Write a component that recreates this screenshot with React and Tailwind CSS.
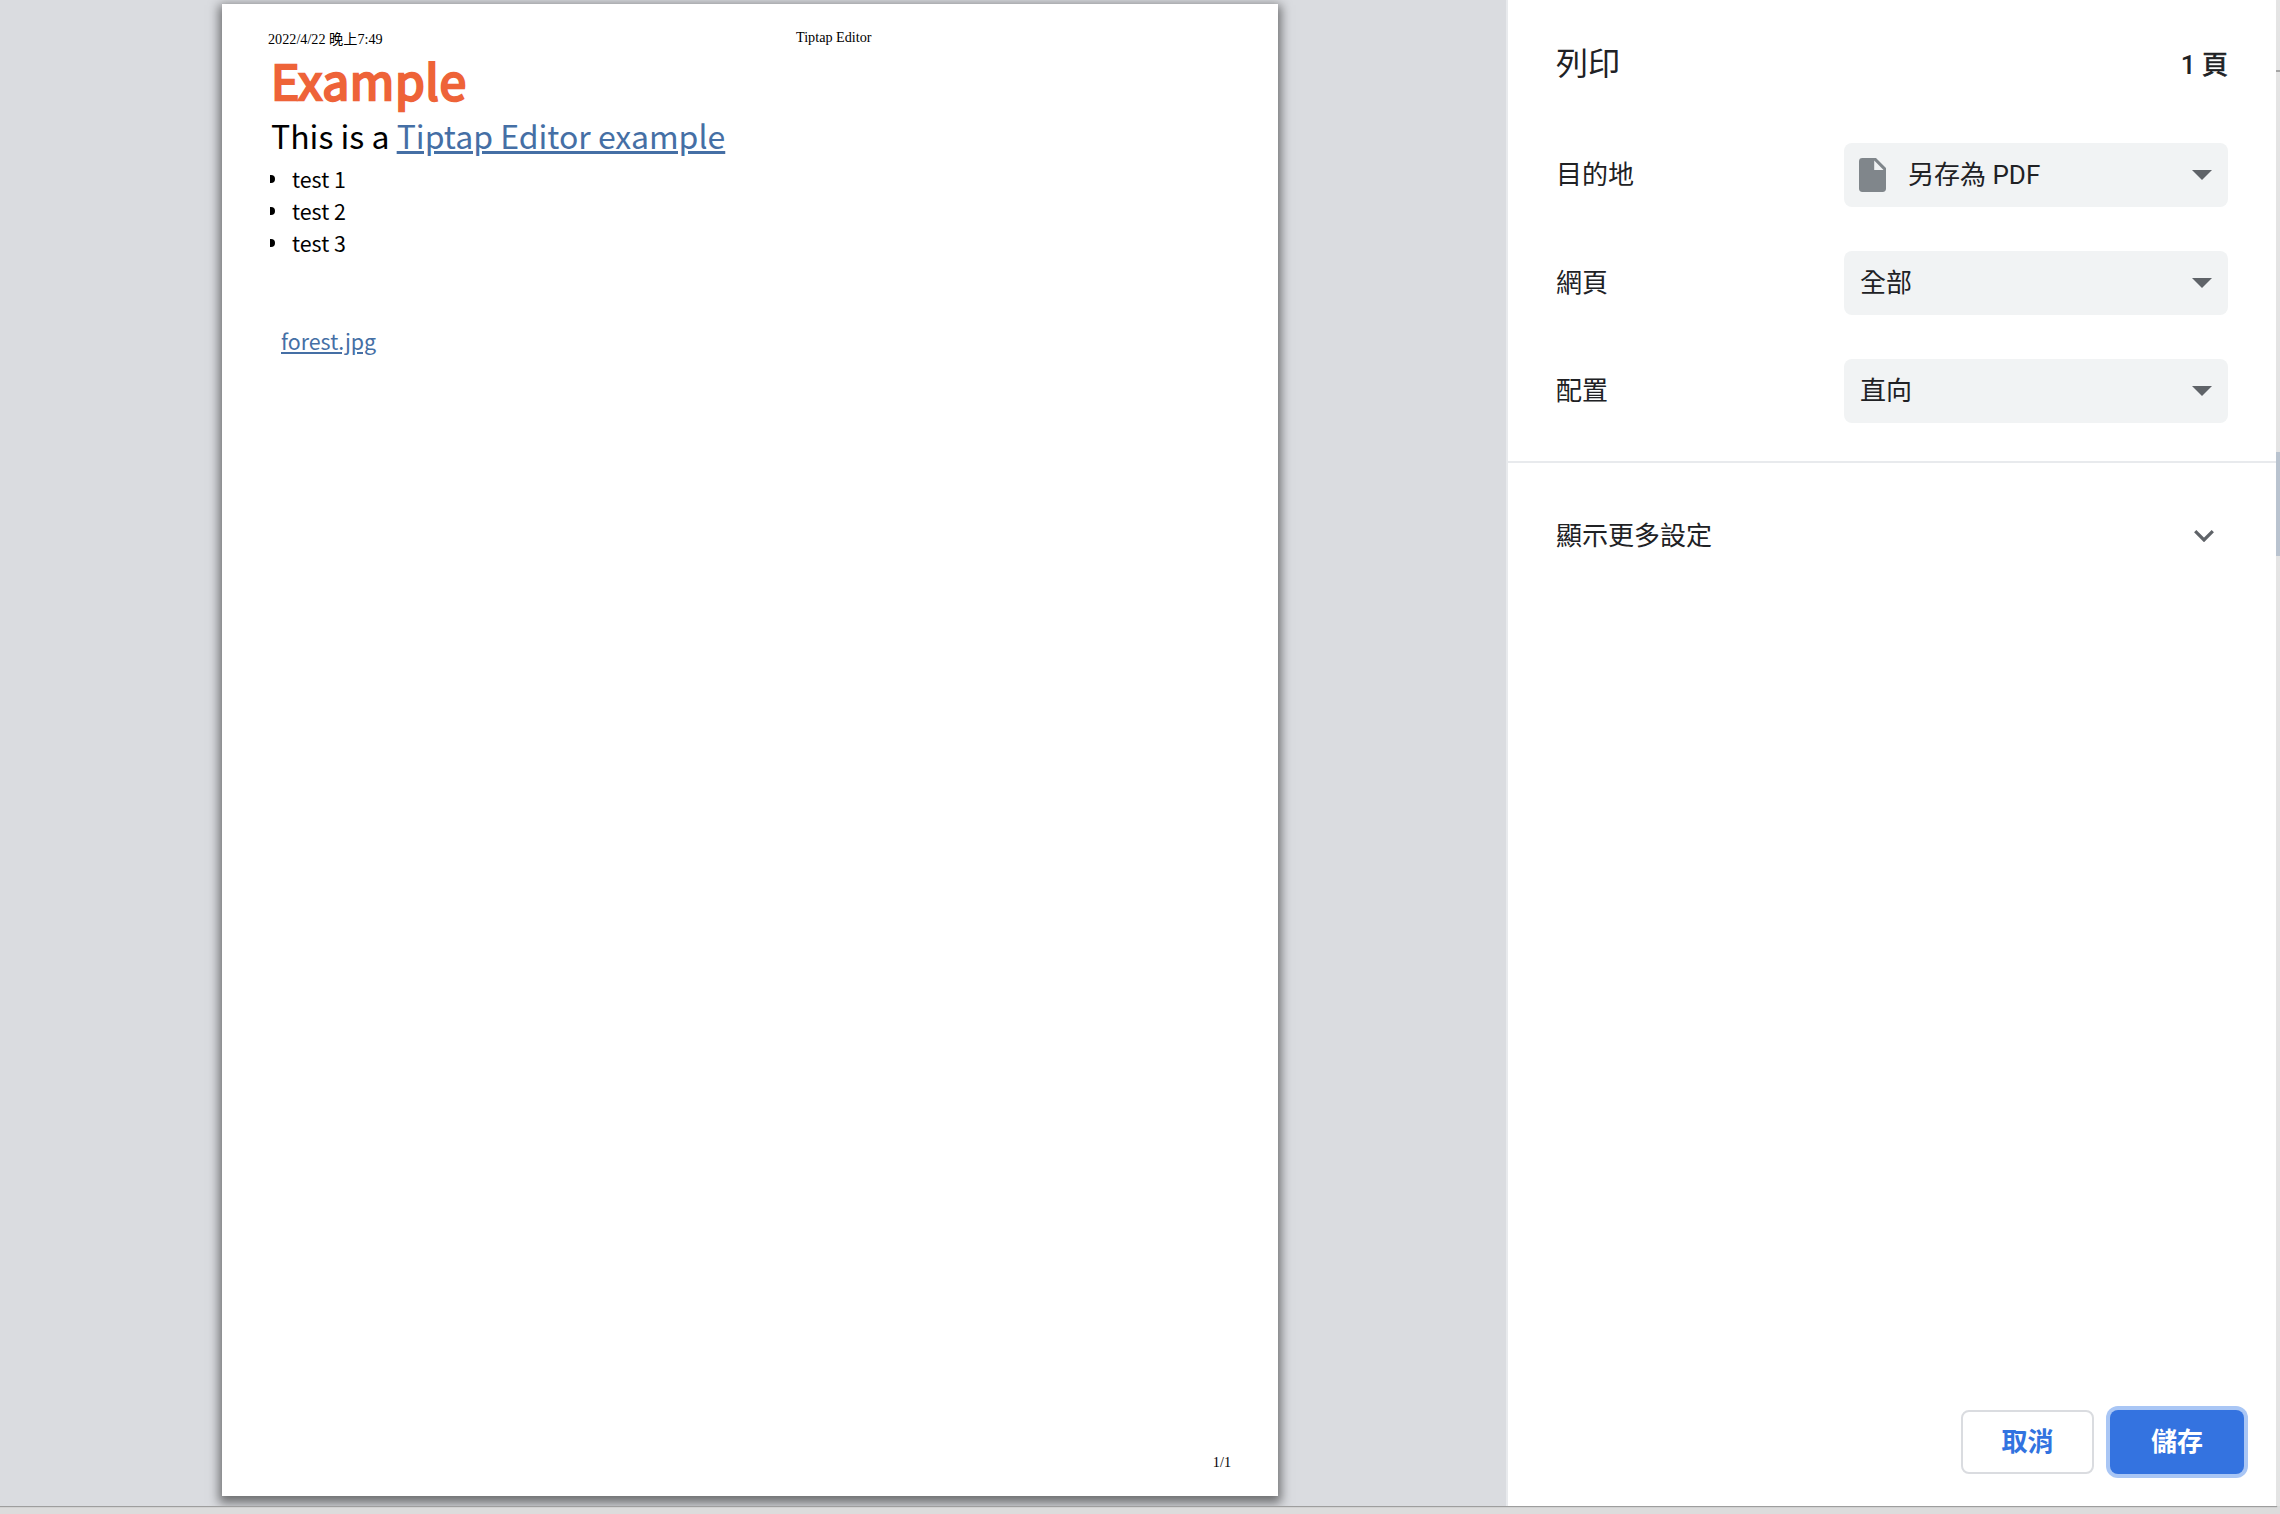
const DOC = "font-['Noto_Sans_CJK_TC',sans-serif]";
const UI = "font-[Roboto,'Noto_Sans_CJK_TC',sans-serif]";
const SERIF = "font-['Liberation_Serif','Noto_Sans_CJK_TC',serif]";

function Caret() {
  return (
    <svg className="ml-auto mr-[16px] h-[10px] w-[20px] shrink-0" viewBox="0 0 20 10">
      <path d="M0 0h20L10 10z" fill="#5f6368" />
    </svg>
  );
}

function FileIcon() {
  return (
    <svg className="-ml-px mr-[22px] h-[34px] w-[27px] shrink-0" viewBox="0 0 27 34">
      <path
        d="M3.4 0H17l10 10v20.6a3.4 3.4 0 0 1-3.4 3.4H3.4A3.4 3.4 0 0 1 0 30.6V3.4A3.4 3.4 0 0 1 3.4 0zM15.2 2.6v9.400H24.6z"
        fill="#80868b"
        fillRule="evenodd"
      />
    </svg>
  );
}

function Setting({ label, value, icon }) {
  return (
    <div className="flex h-[64px] items-center justify-between pl-[48px] pr-[48px]">
      <span>{label}</span>
      <div className="flex h-[64px] w-[384px] items-center rounded-[8px] bg-[#f1f3f4] pl-[16px]">
        {icon && <FileIcon />}
        <span className="whitespace-pre">{value}</span>
        <Caret />
      </div>
    </div>
  );
}

function Page() {
  return (
    <div className="flex h-[1492px] w-[1056px] flex-col bg-white text-black shadow-[0_4px_10px_3px_rgba(0,0,0,0.5)]">
      <div className={`flex h-[50px] text-[14.2px] leading-[20px] ${SERIF}`}>
        <span className="ml-[46px] mt-[25px] w-[528px] whitespace-nowrap">2022/4/22 晚上7:49</span>
        <span className="mt-[23px]">Tiptap Editor</span>
      </div>
      <div className={`flex flex-col pl-[49px] ${DOC}`}>
        <h1 className="h-[56px] text-[48px] font-normal leading-[50px] tracking-[0.6px] text-[#ee6338] [-webkit-text-stroke:2.4px_#ee6338]">
          Example
        </h1>
        <p className="h-[53px] whitespace-nowrap text-[32px] leading-[50px]">
          This is a <span className="text-[#456fa5] underline">Tiptap Editor example</span>
        </p>
        <ul className="flex flex-col text-[21.4px] leading-[32px]">
          {["test 1", "test 2", "test 3"].map((t) => (
            <li key={t} className="flex items-center">
              <span className="-ml-px mr-[17px] h-[8px] w-[5px] rounded-r-full bg-black" />
              {t}
            </li>
          ))}
        </ul>
        <span className="ml-[10px] mt-[66px] text-[21.4px] leading-[32px] text-[#456fa5] underline">forest.jpg</span>
      </div>
      <span className={`mb-[24px] ml-auto mr-[47px] mt-auto text-[14.2px] leading-[20px] ${SERIF}`}>1/1</span>
    </div>
  );
}

export default function App() {
  return (
    <div className="relative flex h-[1514px] w-[2280px] flex-col overflow-hidden bg-[#dcdcdc]">
      <div className="flex h-[1506px]">
        <div className="flex h-full w-[2276px] shrink-0 bg-white shadow-[0_0_1px_1px_rgba(0,0,0,0.28)]">
          <div className="flex w-[1506px] shrink-0 overflow-hidden bg-[#dadce0] pl-[222px] pt-[4px]">
            <Page />
          </div>
          <aside className={`flex grow flex-col border-l-2 border-[#e8eaed] text-[26px] leading-[40px] text-[#202124] ${UI}`}>
            <header className="flex h-[143px] items-start justify-between px-[48px] pt-[44px]">
              <h1 className="text-[32px]">列印</h1>
              <span className="mt-px font-medium">
                1 <span className="font-normal [-webkit-text-stroke:0.7px_#202124]">頁</span>
              </span>
            </header>
            <div className="flex flex-col gap-[44px] pb-[38px]">
              <Setting label="目的地" value="另存為 PDF" icon />
              <Setting label="網頁" value="全部" />
              <Setting label="配置" value="直向" />
            </div>
            <div className="h-[2px] bg-[#e8eaed]" />
            <div className="flex h-[146px] items-center justify-between pl-[48px] pr-[62px]">
              <span>顯示更多設定</span>
              <svg className="h-[12px] w-[20px]" viewBox="0 0 20 12">
                <path d="M1.2 1.2L10 10l8.800-8.800" fill="none" stroke="#5f6368" strokeWidth="3.200" />
              </svg>
            </div>
            <footer className="mt-auto flex justify-end gap-[16px] pb-[32px] pr-[32px] font-bold">
              <button className="h-[64px] w-[133px] rounded-[8px] border-2 border-[#dadce0] text-[#3273e0]">取消</button>
              <button className="h-[64px] w-[134px] rounded-[8px] bg-[#3473e0] text-white shadow-[0_0_0_4px_#a9c6f5]">儲存</button>
            </footer>
          </aside>
        </div>
        <div className="flex w-[4px] flex-col bg-[#e4e4e4]">
          <div className="h-[70px]" />
          <div className="h-[2px] bg-[#a5a5a5]" />
          <div className="h-[380px]" />
          <div className="h-[104px] bg-[#b9c3cf]" />
        </div>
      </div>
    </div>
  );
}
